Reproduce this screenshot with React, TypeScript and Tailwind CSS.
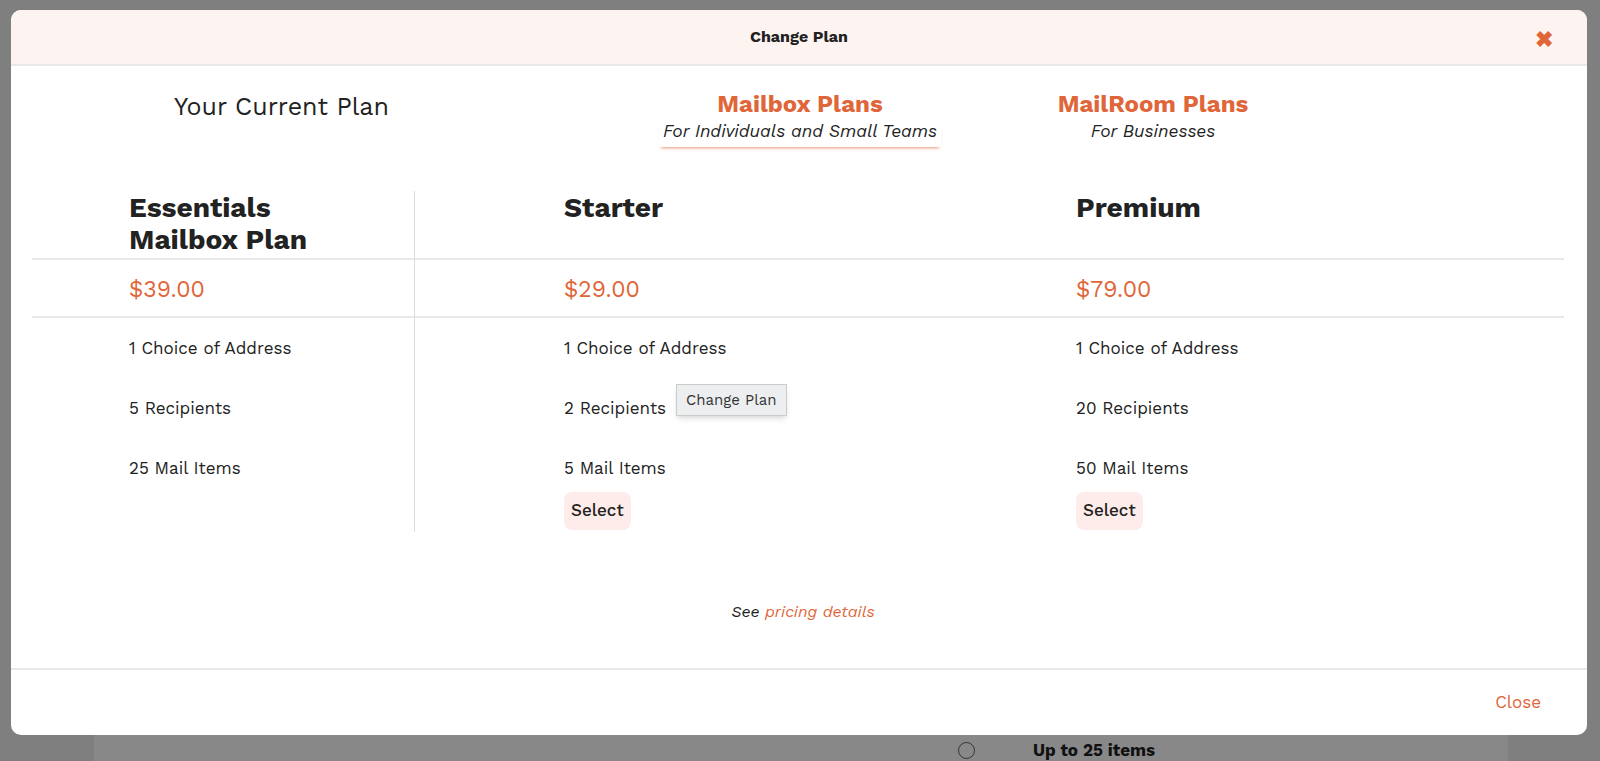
import React from "react";

const rows = [
  ["1 Choice of Address", "1 Choice of Address", "1 Choice of Address"],
  ["5 Recipients", "2 Recipients", "20 Recipients"],
  ["25 Mail Items", "5 Mail Items", "50 Mail Items"],
];

export default function App() {
  const f = { fontFamily: "'Work Sans', Inter, 'Open Sans', sans-serif" };
  return (
    <div className="relative w-[1600px] h-[761px] bg-[#7f7f7f] overflow-hidden" style={f}>
      <div className="absolute left-[94px] right-[92px] top-[735px] bottom-0 bg-[#888888]">
        <div className="flex items-center pl-[864px] pt-[6px] gap-[58px]">
          <div className="w-[17px] h-[17px] rounded-full border border-[#333]" />
          <span className="text-[17px] leading-[18px] font-bold text-[#111]">Up to 25 items</span>
        </div>
      </div>
      <div className="absolute left-[11px] top-[10px] w-[1576px] h-[725px] bg-white rounded-[10px] overflow-hidden flex flex-col">
        <div className="h-[56px] bg-[#fdf4f2] border-b-2 border-[#e8e8e8] flex items-center justify-center relative shrink-0">
          <span className="text-[16px] font-bold text-[#222]">Change Plan</span>
          <span className="absolute right-[34px] top-[13px] text-[22px] font-bold text-[#e0663a]">✖</span>
        </div>
        <div className="flex-1 relative">
          <div className="flex items-start h-[100px]">
            <div className="w-[390px] pl-[163px] pt-[22px] text-[25px] text-[#222] font-normal">Your Current Plan</div>
            <div className="flex ml-[239px] gap-[33px] pt-[22px]">
              <div className="w-[320px] flex flex-col items-center">
                <span className="text-[24px] font-bold text-[#e0663a] leading-[32px]">Mailbox Plans</span>
                <span className="text-[17.5px] italic text-[#222] leading-[22px] px-[4px] pb-[5px] shadow-[0_3px_3px_-2px_rgba(224,102,58,0.7)]">For Individuals and Small Teams</span>
              </div>
              <div className="w-[320px] flex flex-col items-center">
                <span className="text-[24px] font-bold text-[#e0663a] leading-[32px]">MailRoom Plans</span>
                <span className="text-[17.5px] italic text-[#222] leading-[22px]">For Businesses</span>
              </div>
            </div>
          </div>
          <div className="ml-[21px] mr-[23px] mt-[25px] flex">
            {[0, 1, 2].map((c) => (
              <div
                key={c}
                className={
                  c === 0
                    ? "w-[383px] border-r border-[#ddd]"
                    : c === 1
                    ? "w-[512px]"
                    : "flex-1"
                }
              >
                <div className={"border-b-2 border-[#e8e8e8] h-[69px] pt-[1px] " + (c === 0 ? "pl-[97px]" : "pl-[149px]")}>
                  <div className="text-[28px] font-bold text-[#222] leading-[32px]">
                    {c === 0 ? <>Essentials<br />Mailbox Plan</> : c === 1 ? "Starter" : "Premium"}
                  </div>
                </div>
                <div className={"border-b-2 border-[#e8e8e8] h-[58px] flex items-center pt-[4px] " + (c === 0 ? "pl-[97px]" : "pl-[149px]")}>
                  <span className="text-[23px] text-[#e0663a]">{["$39.00", "$29.00", "$79.00"][c]}</span>
                </div>
                <div className={(c === 0 ? "pl-[97px]" : "pl-[149px]") + " h-[214px] pt-[18px]"}>
                  {rows.map((r, i) => (
                    <div key={i} className="h-[60px] text-[17px] text-[#222] leading-[24px] relative">
                      {r[c]}
                      {c === 1 && i === 1 && (
                        <span className="absolute left-[112px] top-[-12px] px-[9px] py-[3px] bg-[#eceef0] border border-[#ccc] text-[15px] text-[#333] shadow-md">Change Plan</span>
                      )}
                    </div>
                  ))}
                  {c > 0 && (
                    <div className="-mt-[24px]">
                      <span className="inline-block bg-[#fdecea] rounded-[8px] px-[7px] py-[6px] text-[17px] font-medium text-[#222]">Select</span>
                    </div>
                  )}
                </div>
              </div>
            ))}
          </div>
          <div className="text-center text-[16px] italic text-[#222] mt-[68px] pl-[8px]">
            See <span className="text-[#e0663a]">pricing details</span>
          </div>
        </div>
        <div className="h-[67px] border-t-2 border-[#e8e8e8] flex items-center justify-end pr-[46px] shrink-0">
          <span className="text-[17px] text-[#e0663a]">Close</span>
        </div>
      </div>
    </div>
  );
}
